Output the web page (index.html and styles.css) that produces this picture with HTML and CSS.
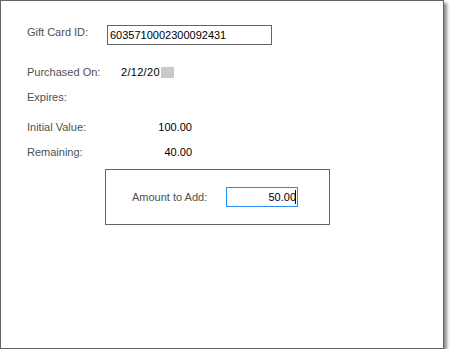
FILE: index.html
```html
<!DOCTYPE html>
<html lang="en">
<head>
  <meta charset="UTF-8">
  <title>Gift Card</title>
  <link rel="stylesheet" href="styles.css">
</head>
<body>
  <div class="frame">
    <div class="row row-id">
      <span class="label label-id">Gift Card ID:</span>
      <input class="field field-id" type="text" value="6035710002300092431">
    </div>

    <div class="row row-purchased">
      <span class="label label-wide">Purchased On:</span>
      <span class="value">2/12/20</span><span class="blur"></span>
    </div>
    <div class="row row-expires">
      <span class="label label-wide">Expires:</span>
    </div>

    <div class="row row-initial">
      <span class="label">Initial Value:</span>
      <span class="amount">100.00</span>
    </div>
    <div class="row row-remaining">
      <span class="label">Remaining:</span>
      <span class="amount">40.00</span>
    </div>

    <div class="add-box">
      <span class="label label-add">Amount to Add:</span>
      <div class="field-wrap">
        <input class="field field-add" type="text" value="50.00">
        <span class="caret"></span>
      </div>
    </div>
  </div>
</body>
</html>
```

FILE: styles.css
```css
/* Ventana base */
body {
  margin: 0;
  background-color: #ffffff;
  font-family: 'Liberation Sans', Arial, sans-serif;
  font-size: 11px;
}
.frame {
  box-sizing: border-box;
  width: 444px;
  height: 349px;
  border: 1px solid #646464;
  background-color: #ffffff;
  box-shadow: 3px 3px 3px rgba(0, 0, 0, 0.45);
  padding: 24px 0 0 26px;
  display: flex;
  flex-direction: column;
}
.row {
  display: flex;
  align-items: flex-start;
  line-height: 14px;
}
.label {
  color: #505050;
  width: 94px;
}
.label-id {
  width: 80px;
}
.value {
  color: #000000;
  letter-spacing: 0.3px;
}
.blur {
  display: inline-block;
  width: 13px;
  height: 11px;
  margin-top: 2px;
  margin-left: 1px;
  background-color: #c8c9cc;
}
.amount {
  color: #000000;
  width: 71px;
  text-align: right;
}

/* Espaciado entre filas */
.row-purchased {
  margin-top: 20px;
}
.row-expires {
  margin-top: 11px;
}
.row-initial {
  margin-top: 16px;
}
.row-remaining {
  margin-top: 11px;
}

/* Campos de texto */
.field {
  box-sizing: border-box;
  height: 20px;
  margin: 0;
  padding: 0 2px;
  border: 1px solid #646464;
  font-family: 'Liberation Sans', Arial, sans-serif;
  font-size: 11px;
  color: #000000;
  background-color: #ffffff;
  outline: none;
}
.field-id {
  width: 165px;
}

/* Caja de monto */
.add-box {
  box-sizing: border-box;
  margin: 10px 0 0 78px;
  width: 225px;
  height: 56px;
  border: 1px solid #646464;
  display: flex;
  align-items: center;
  padding-left: 26px;
}
.label-add {
  width: 94px;
}
.field-wrap {
  position: relative;
}
.field-add {
  width: 72px;
  border-color: #2b8cf2;
  text-align: right;
  padding-right: 1px;
}
.caret {
  position: absolute;
  right: 2px;
  top: 3px;
  width: 1px;
  height: 14px;
  background-color: #000000;
}
```
